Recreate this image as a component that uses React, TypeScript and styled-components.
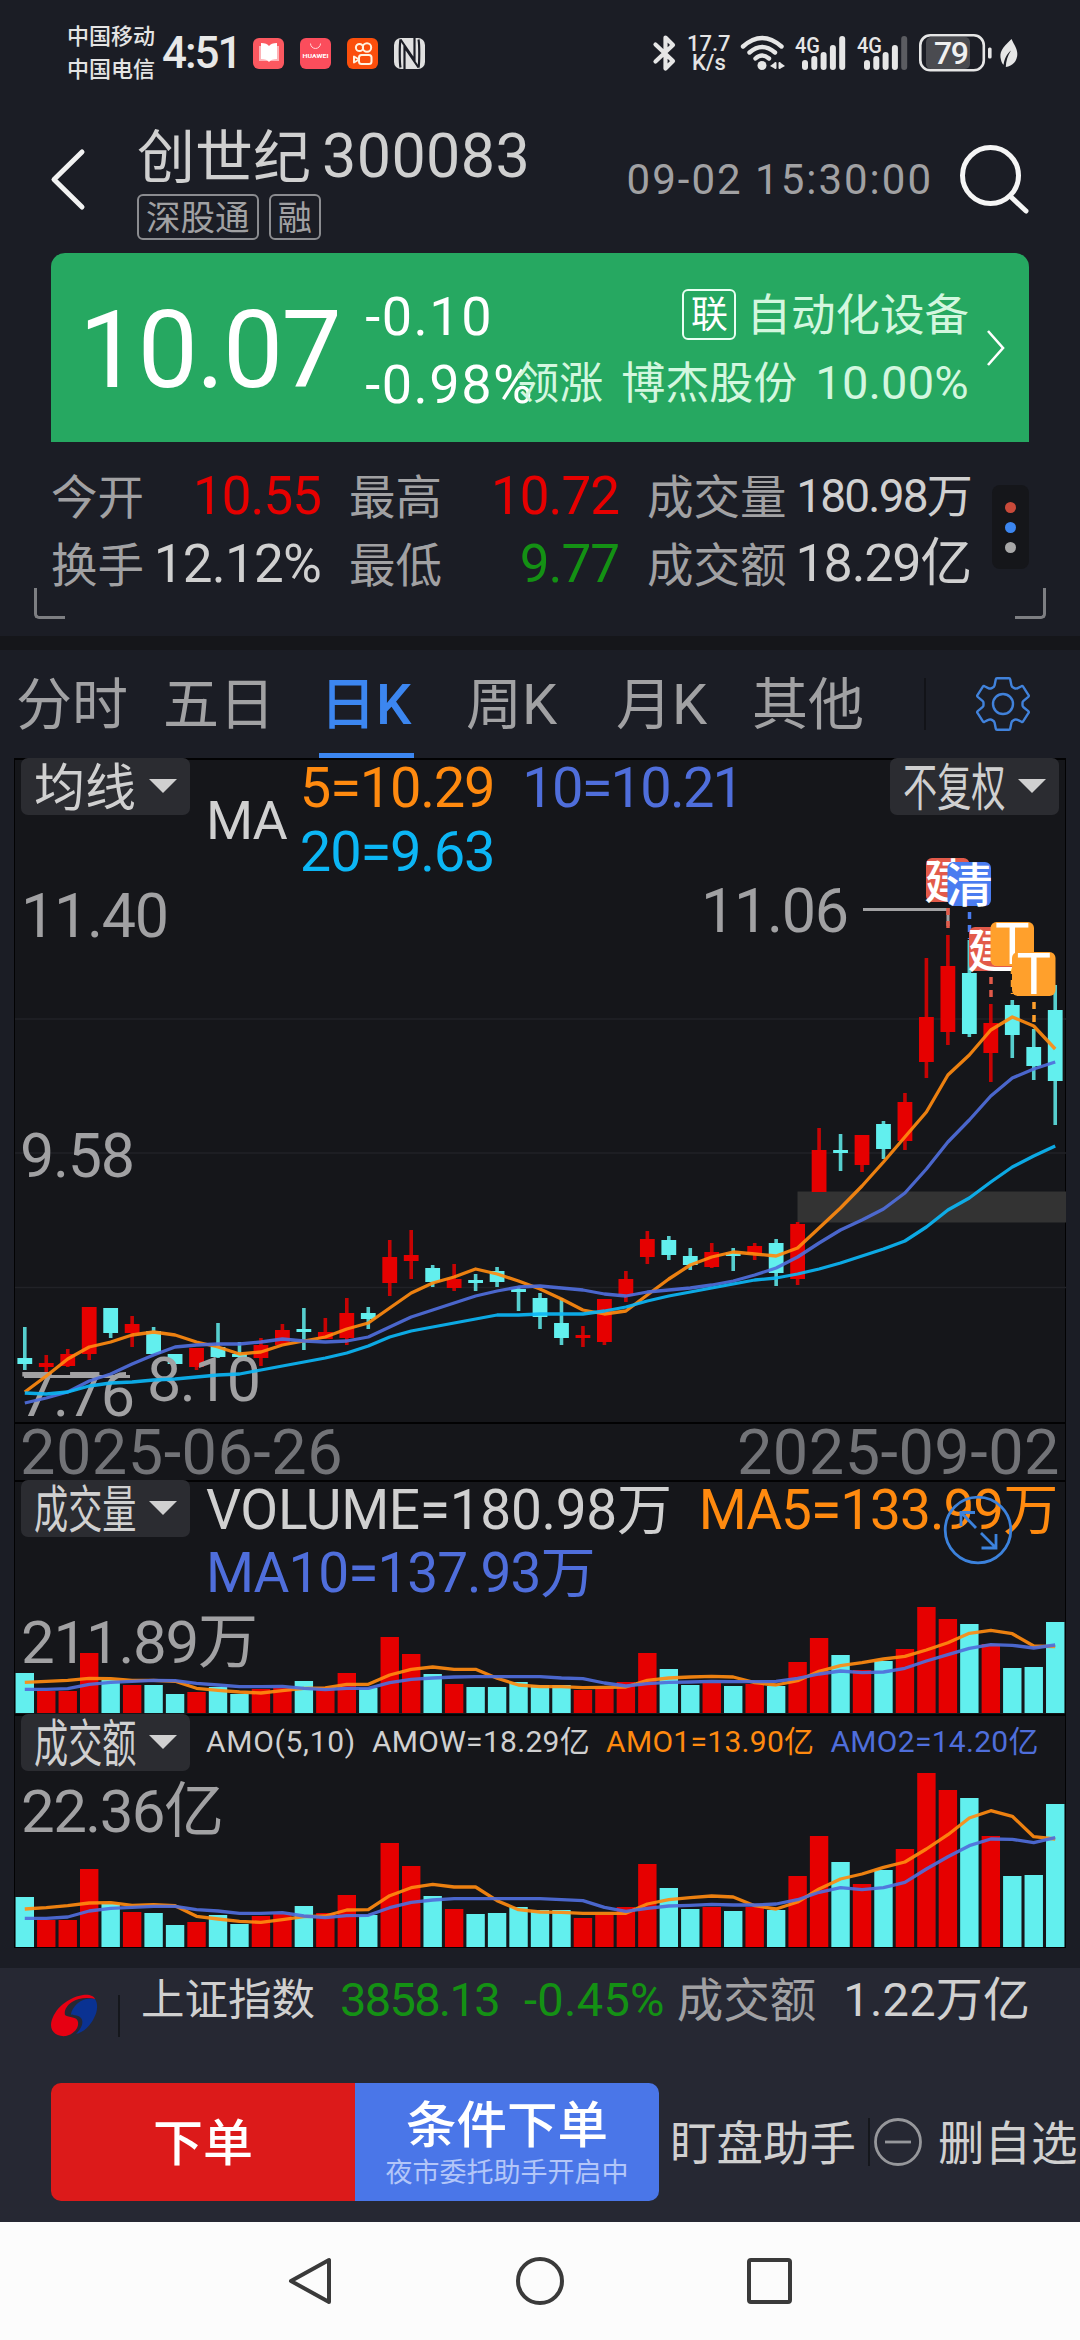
import React from 'react';
import styled, { createGlobalStyle, css } from 'styled-components';

const C = {
  bg: '#1b1d25',
  panel: '#15161a',
  bar: '#262833',
  text: '#d0d0d0',
  dim: '#a1a1a3',
  faint: '#727377',
  red: '#e60000',
  down: '#62efee',
  green: '#149114',
  blue: '#3c86f0',
  ma5: '#ff8a0f',
  ma10: '#4f6edb',
  ma20: '#0cb6f5',
};

const FONT = 'Roboto, "Noto Sans CJK SC", sans-serif';
const HAN_FONT = '"Open Sans", "Noto Sans CJK SC", sans-serif';

const GlobalStyle = createGlobalStyle`
  * { box-sizing: border-box; }
  html, body { margin: 0; padding: 0; background: ${C.bg}; }
  body { font-family: ${FONT}; color: ${C.text}; overflow: hidden; }
  svg { display: block; flex: none; overflow: visible; }
`;

/* ---------- market data ---------- */

type Candle = [up: 0 | 1, high: number, top: number, bottom: number, low: number];

const candles: Candle[] = [
  [0, 1327, 1358, 1364, 1370], [1, 1355, 1363, 1367, 1372], [1, 1349, 1354, 1366, 1367],
  [1, 1307, 1307, 1354, 1360], [0, 1308, 1308, 1333, 1338], [1, 1316, 1324, 1333, 1347],
  [0, 1327, 1331, 1354, 1354], [0, 1354, 1354, 1364, 1364], [1, 1348, 1348, 1367, 1370],
  [0, 1323, 1347, 1357, 1358], [0, 1342, 1354, 1357, 1358], [1, 1338, 1345, 1358, 1366],
  [1, 1324, 1330, 1345, 1345], [0, 1308, 1329, 1332, 1350], [1, 1318, 1332, 1339, 1339],
  [1, 1298, 1313, 1338, 1345], [0, 1307, 1313, 1319, 1329], [1, 1240, 1257, 1283, 1296],
  [1, 1230, 1255, 1261, 1279], [0, 1265, 1268, 1282, 1287], [1, 1264, 1279, 1288, 1291],
  [0, 1274, 1280, 1283, 1291], [0, 1267, 1271, 1282, 1287], [0, 1287, 1289, 1292, 1311],
  [0, 1293, 1298, 1317, 1329], [0, 1298, 1323, 1338, 1345], [1, 1326, 1335, 1338, 1347],
  [1, 1299, 1299, 1342, 1345], [1, 1271, 1279, 1296, 1302], [1, 1231, 1239, 1257, 1264],
  [0, 1236, 1240, 1255, 1260], [0, 1248, 1256, 1265, 1270], [1, 1243, 1252, 1267, 1268],
  [0, 1248, 1253, 1256, 1271], [1, 1243, 1246, 1254, 1260], [0, 1239, 1243, 1273, 1286],
  [1, 1222, 1224, 1279, 1285], [1, 1128, 1150, 1192, 1192], [0, 1134, 1150, 1153, 1171],
  [1, 1135, 1135, 1165, 1172], [0, 1121, 1124, 1149, 1159], [1, 1093, 1102, 1141, 1150],
  [1, 958, 1017, 1062, 1078], [1, 935, 966, 1032, 1045], [0, 940, 973, 1034, 1037],
  [1, 1004, 1023, 1053, 1082], [0, 1000, 1005, 1035, 1058], [0, 1029, 1047, 1066, 1080],
  [0, 985, 1010, 1081, 1125],
];

const priceMa5 = [1392, 1376, 1359, 1347, 1342, 1335, 1332, 1335, 1342, 1347, 1354, 1352, 1345, 1341, 1337, 1329, 1323, 1308, 1293, 1283, 1277, 1269, 1274, 1281, 1289, 1299, 1310, 1314, 1311, 1295, 1279, 1265, 1257, 1252, 1254, 1256, 1248, 1228, 1208, 1186, 1162, 1137, 1112, 1075, 1055, 1030, 1017, 1026, 1049];
const priceMa10 = [1403, 1398, 1392, 1381, 1374, 1364, 1355, 1347, 1345, 1344, 1344, 1342, 1339, 1341, 1342, 1341, 1337, 1327, 1317, 1310, 1303, 1296, 1291, 1287, 1286, 1288, 1290, 1294, 1296, 1292, 1290, 1288, 1285, 1281, 1275, 1268, 1257, 1243, 1230, 1220, 1209, 1193, 1169, 1142, 1120, 1096, 1078, 1069, 1062];
const priceMa20 = [1393, 1394, 1392, 1386, 1383, 1382, 1380, 1379, 1377, 1375, 1374, 1370, 1366, 1362, 1358, 1353, 1346, 1337, 1331, 1327, 1323, 1319, 1315, 1315, 1314, 1314, 1314, 1311, 1307, 1301, 1296, 1292, 1288, 1284, 1280, 1278, 1274, 1269, 1263, 1256, 1249, 1241, 1227, 1210, 1198, 1182, 1167, 1156, 1146];

const volTops = [1673, 1691, 1691, 1653, 1680, 1685, 1685, 1694, 1692, 1687, 1694, 1689, 1688, 1681, 1687, 1673, 1688, 1637, 1654, 1674, 1684, 1687, 1687, 1682, 1685, 1685, 1690, 1688, 1682, 1653, 1669, 1685, 1683, 1686, 1684, 1686, 1662, 1638, 1655, 1670, 1661, 1649, 1607, 1619, 1624, 1644, 1668, 1667, 1622];
const amtTops = [1897, 1920, 1920, 1869, 1904, 1912, 1913, 1925, 1922, 1915, 1924, 1916, 1914, 1906, 1913, 1895, 1915, 1843, 1866, 1896, 1909, 1914, 1913, 1907, 1910, 1910, 1918, 1915, 1907, 1864, 1888, 1909, 1907, 1911, 1907, 1910, 1876, 1836, 1862, 1884, 1870, 1849, 1773, 1790, 1798, 1836, 1876, 1875, 1804];

/* averages of the two lower panes, in thirds of a pixel below the y = 1460 line */
const volMa5 = [667, 664, 661, 655, 656, 661, 661, 664, 685, 691, 696, 699, 692, 685, 684, 673, 673, 645, 628, 621, 628, 628, 655, 675, 680, 680, 683, 682, 681, 661, 654, 651, 649, 651, 668, 675, 662, 634, 617, 608, 597, 589, 570, 548, 520, 511, 521, 558, 560];
const volMa10 = [688, 688, 686, 673, 667, 664, 661, 662, 670, 675, 680, 680, 679, 685, 689, 685, 685, 668, 658, 654, 651, 650, 650, 650, 650, 654, 656, 669, 678, 671, 667, 666, 664, 665, 665, 664, 655, 642, 633, 638, 636, 625, 603, 584, 565, 554, 556, 564, 555];
const amtMa5 = [1347, 1343, 1337, 1329, 1328, 1336, 1334, 1337, 1369, 1377, 1384, 1387, 1379, 1370, 1368, 1350, 1349, 1307, 1283, 1273, 1281, 1281, 1322, 1349, 1356, 1357, 1360, 1360, 1360, 1332, 1319, 1313, 1308, 1311, 1337, 1347, 1326, 1287, 1257, 1242, 1222, 1206, 1167, 1124, 1074, 1052, 1069, 1130, 1137];
const amtMa10 = [1375, 1375, 1371, 1353, 1345, 1342, 1339, 1339, 1349, 1353, 1360, 1360, 1358, 1368, 1373, 1367, 1366, 1343, 1327, 1320, 1316, 1316, 1316, 1316, 1316, 1319, 1322, 1342, 1354, 1345, 1338, 1336, 1333, 1335, 1335, 1332, 1319, 1297, 1283, 1289, 1283, 1267, 1227, 1190, 1157, 1137, 1138, 1148, 1133];

const barX = (i: number) => 24.8 + i * 21.467;
const line = (ys: number[]) => ys.map((y, i) => `${barX(i).toFixed(1)},${y}`).join(' ');
const lowerLine = (ys: number[]) => line(ys.map((y) => Math.round((1460 + y / 3) * 10) / 10));

/* ---------- text ---------- */

interface TxtProps {
  $s: number;
  $c?: string;
  $ls?: number;
  $w?: number;
  $ml?: number;
}

const Txt = styled.span<TxtProps>`
  flex: none;
  white-space: nowrap;
  line-height: 1;
  font-size: ${(p) => p.$s}px;
  color: ${(p) => p.$c ?? C.text};
  letter-spacing: ${(p) => p.$ls ?? 0}px;
  font-weight: ${(p) => p.$w ?? 400};
  margin-left: ${(p) => p.$ml ?? 0}px;
`;

const Han = styled(Txt)`
  font-family: ${HAN_FONT};
`;

/* ---------- layout ---------- */

const Screen = styled.div`
  width: 1080px;
  height: 2340px;
  display: flex;
  flex-direction: column;
  background: ${C.bg};
  overflow: hidden;
`;

const StatusBar = styled.header`
  height: 105px;
  padding: 1px 62px 0 67px;
  display: flex;
  align-items: center;
`;

const Carriers = styled.div`
  display: grid;
  gap: 11px;
  width: 95px;
  padding-bottom: 3px;
`;

const StatusGroup = styled.div<{ $gap: number; $ml?: string }>`
  display: flex;
  align-items: center;
  gap: ${(p) => p.$gap}px;
  margin-left: ${(p) => p.$ml ?? '0'};
`;

const Speed = styled.div`
  display: grid;
  justify-items: center;
  width: 43px;
  line-height: 19px;
  font-size: 22px;
  font-weight: 500;
  color: #e4e4e4;
  margin: 0 10px 0 11px;
`;

const AppIcon = styled.div<{ $bg: string }>`
  width: 31px;
  height: 31px;
  border-radius: 6px;
  background: ${(p) => p.$bg};
  display: grid;
  place-items: center;
`;

const Header = styled.div`
  height: 148px;
  padding: 0 51px;
  display: flex;
  align-items: flex-start;
`;

const TitleBlock = styled.div`
  margin-left: 50px;
  padding-top: 19px;
`;

const HeaderRight = styled.div`
  height: 148px;
  margin-left: auto;
  padding-top: 1px;
  display: flex;
  align-items: center;
  gap: 27px;
`;

const TitleRow = styled.div`
  height: 64px;
  display: flex;
  align-items: center;
  gap: 11px;
`;

const TagRow = styled.div`
  margin-top: 6px;
  display: flex;
  gap: 10px;
`;

const Tag = styled.span`
  height: 46px;
  padding: 0 7px;
  border: 2px solid #8b8c90;
  border-radius: 6px;
  color: ${C.dim};
  font-family: ${HAN_FONT};
  font-size: 34.5px;
  line-height: 41px;
`;

const QuoteCard = styled.section`
  margin: 0 51px;
  height: 189px;
  padding: 0 24px 0 28px;
  border-radius: 14px 14px 0 0;
  background: #26a861;
  display: flex;
  align-items: center;
`;

const Price = styled(Txt)`
  padding-top: 5px;
`;

const Change = styled.div`
  width: 150px;
  margin-left: 25px;
  display: grid;
  gap: 14px;
  padding-top: 6px;
`;

const Sector = styled.div`
  flex: 1;
  display: grid;
  justify-items: end;
  padding-top: 1px;
`;

const SectorRow = styled.div<{ $gap: number }>`
  height: 68px;
  display: flex;
  align-items: center;
  gap: ${(p) => p.$gap}px;
`;

const LinkTag = styled.span`
  width: 54px;
  height: 51px;
  border: 2px solid #e9fff2;
  border-radius: 6px;
  color: #fff;
  font-family: ${HAN_FONT};
  font-size: 37px;
  line-height: 45px;
  text-align: center;
`;

const Stats = styled.section`
  position: relative;
  height: 194px;
  padding: 20px 51px 0;
  display: flex;
  align-items: flex-start;
  justify-content: space-between;
`;

const StatGrid = styled.div`
  display: grid;
  grid-template-columns: 270px 270px 324px;
  grid-auto-rows: 68px;
  column-gap: 28px;
`;

const StatCell = styled.div`
  display: flex;
  align-items: center;
  justify-content: space-between;
`;

const MorePill = styled.div`
  width: 37px;
  height: 84px;
  margin-top: 23px;
  border-radius: 8px;
  background: ${C.panel};
  display: flex;
  flex-direction: column;
  align-items: center;
  justify-content: center;
  gap: 9px;
`;

const Dot = styled.i<{ $c: string }>`
  width: 11px;
  height: 11px;
  border-radius: 50%;
  background: ${(p) => p.$c};
`;

const Corner = styled.i<{ $side: 'left' | 'right' }>`
  position: absolute;
  bottom: 17px;
  width: 31px;
  height: 31px;
  border-bottom: 3px solid #7d7e82;
  ${(p) =>
    p.$side === 'left'
      ? 'left: 34px; border-left: 3px solid #7d7e82; border-bottom-left-radius: 5px;'
      : 'right: 34px; border-right: 3px solid #7d7e82; border-bottom-right-radius: 5px;'}
`;

const Gap = styled.div`
  height: 14px;
  background: ${C.panel};
`;

const Tabs = styled.nav`
  height: 108px;
  padding: 0 50px 0 16px;
  display: flex;
`;

const Tab = styled.div<{ $active?: boolean; $w: number }>`
  width: ${(p) => p.$w}px;
  height: 108px;
  line-height: 111px;
  font-size: 56px;
  white-space: nowrap;
  color: ${(p) => (p.$active ? C.blue : C.dim)};
  font-weight: ${(p) => (p.$active ? 500 : 400)};
  ${(p) =>
    p.$active &&
    css`
      background: linear-gradient(${C.blue}, ${C.blue}) no-repeat 1px 103px / 95px 5px;
      text-indent: 2px;
    `}
`;

const TabDivider = styled.i`
  width: 2px;
  height: 52px;
  margin: 28px 0 0 60px;
  background: #121318;
`;

const GearWrap = styled.div`
  margin: 27px 0 0 auto;
`;

const ChartPanel = styled.main`
  margin: 0 14px;
  background: ${C.panel};
  box-shadow: inset 0 0 0 1px #020203;
`;

const Pane = styled.section<{ $h: number }>`
  display: grid;
  height: ${(p) => p.$h}px;
  box-shadow: inset 0 1px 0 1px #020203;
  & > * { grid-area: 1 / 1; }
`;

const PaneHead = styled.div`
  padding: 0 7px;
  display: flex;
  align-items: flex-start;
  z-index: 1;
`;

const Select = styled.div`
  width: 169px;
  height: 57px;
  padding: 0 13px 1px;
  border-radius: 7px;
  background: #2b2c31;
  display: flex;
  align-items: center;
`;

const SelectLabel = styled.span<{ $x: number }>`
  width: 104px;
  white-space: nowrap;
  font-family: ${HAN_FONT};
  font-size: 51px;
  line-height: 56px;
  transform: scaleX(${(p) => p.$x});
  transform-origin: 0 50%;
`;

const Caret = styled.i`
  margin-left: auto;
  border: solid transparent;
  border-width: 14px 14px 0;
  border-top-color: ${C.text};
`;

const Legend = styled.div<{ $ml: number; $pt: number; $gap: number }>`
  flex: 1;
  margin-left: ${(p) => p.$ml}px;
  padding-top: ${(p) => p.$pt}px;
  display: flex;
  flex-wrap: wrap;
  column-gap: ${(p) => p.$gap}px;
  row-gap: 8px;
`;

const MaTitle = styled.div`
  margin-left: 16px;
  padding-top: 36px;
`;

const DateRow = styled.div`
  height: 58px;
  padding: 3px 6px 0 6px;
  display: flex;
  align-items: center;
  justify-content: space-between;
  box-shadow: inset 0 1px 0 1px #020203;
`;

const ExpandButton = styled.div`
  width: 68px;
  height: 70px;
  justify-self: end;
  margin: 15px 54px 0 0;
  z-index: 2;
`;

const Footer = styled.footer`
  margin-top: 20px;
  height: 254px;
  background: ${C.bar};
`;

const IndexRow = styled.div`
  height: 66px;
  padding: 0 0 4px 51px;
  display: flex;
  align-items: center;
`;

const IndexLogo = styled.div`
  align-self: flex-end;
  margin-bottom: -8px;
  width: 69px;
  height: 44px;
  display: flex;
  justify-content: space-between;
  align-items: center;
`;

const Divider = styled.i<{ $h: number; $ml?: number }>`
  width: 2px;
  height: ${(p) => p.$h}px;
  margin-left: ${(p) => p.$ml ?? 0}px;
  background: #15171c;
`;

const ActionRow = styled.div`
  margin-top: 49px;
  height: 118px;
  padding-left: 51px;
  display: flex;
  align-items: center;
`;

const OrderButton = styled.div<{ $kind: 'plain' | 'conditional' }>`
  width: 304px;
  height: 118px;
  flex: none;
  display: flex;
  flex-direction: column;
  align-items: center;
  justify-content: center;
  gap: 8px;
  background: ${(p) => (p.$kind === 'plain' ? '#dc1a1a' : '#4a76e8')};
  border-radius: ${(p) => (p.$kind === 'plain' ? '10px 0 0 10px' : '0 10px 10px 0')};
`;

const RemoveIcon = styled.svg`
  margin-left: 4px;
`;

const SystemNav = styled.div`
  flex: 1;
  background: #fcfcfc;
  display: grid;
  grid-template-columns: repeat(3, 229px);
  justify-content: center;
  justify-items: center;
  align-items: center;
`;

/* ---------- icons ---------- */

const BluetoothIcon = () => (
  <svg width="23" height="36" viewBox="0 0 23 36" fill="none" stroke="#e6e6e6" strokeWidth="4.2" strokeLinecap="round" strokeLinejoin="round">
    <path d="M2.500 9.500 20 26l-7.500 7.500v-31L20 10 2.500 26.500" />
  </svg>
);

const WifiIcon = () => (
  <svg width="45" height="36" viewBox="0 0 45 36" fill="none" stroke="#e6e6e6" strokeWidth="4.4" strokeLinecap="round">
    <path d="M3 11.500Q22 -5.500 41.500 11.500" />
    <path d="M9.500 17.500Q22 6.500 35 17.500" />
    <path d="M15.500 23.500Q22 17.500 29 23.500" />
    <circle cx="22" cy="30.500" r="4.500" fill="#e6e6e6" stroke="none" />
    <path d="M30 31 35.500 27v7zM45 31 39.500 27v7z" fill="#e6e6e6" stroke="none" />
    <path d="M35.500 28v5M39.500 28v5" strokeWidth="2" />
  </svg>
);

const Signal = ({ bars }: { bars: number }) => (
  <svg width="51" height="35" viewBox="0 0 51 35">
    <text x="0" y="17" fontSize="22" fontWeight="500" fontFamily={FONT} fill="#e6e6e6" textLength="25" lengthAdjust="spacingAndGlyphs">4G</text>
    {[10, 14, 18, 25, 34].map((h, i) => (
      <rect key={h} x={7 + i * 9.3} y={34 - h} width="6" height={h} rx="3" fill={i < bars ? '#e6e6e6' : '#5b5c61'} />
    ))}
  </svg>
);

const BatteryIcon = () => (
  <svg width="73" height="38" viewBox="0 0 73 38">
    <rect x="7" y="3" width="44" height="32" rx="5" fill="#4a4b50" />
    <rect x="1.300" y="1.300" width="63.500" height="35" rx="10" fill="none" stroke="#e6e6e6" strokeWidth="2.600" />
    <rect x="69" y="13.500" width="3.600" height="11" rx="1.500" fill="#e6e6e6" />
    <text x="15" y="30" fontSize="32" fontWeight="500" fontFamily={FONT} fill="#f0f0f0" textLength="35">79</text>
  </svg>
);

const LeafIcon = () => (
  <svg width="18" height="29" viewBox="0 0 18 29">
    <path d="M11.500 0C2 9-1 13 1 21c.5 2 1.300 4 2.600 4.800C4.500 19 7 15 11 11.500 7.500 17 6 22 5.800 28c7-1 11.500-6 11.500-13C17.300 9 14 6 11.500 0z" fill="#e6e6e6" />
  </svg>
);

const NfcIcon = () => (
  <svg width="31" height="31" viewBox="0 0 31 31">
    <rect width="31" height="31" rx="7" fill="#e0e0e0" />
    <g fill="none" stroke="#1b1d25" strokeWidth="2.200">
      <path d="M6.500 1.500C5.500 6 5.500 25 6.500 29.500M24.500 1.500c1 4.500 1 23.500 0 28" />
      <path d="M10.500 31V9l14 20.500M20.500 0v22L6.500 1.500" />
    </g>
  </svg>
);

const GearIcon = () => (
  <svg width="54" height="54" viewBox="0 0 54 54" fill="none" stroke="#4182db" strokeWidth="2.400" strokeLinejoin="round">
    <path d="M21 1.300h12q1 0 1.200 1l1.200 6q.3 1.600 2 2.400l1.300.6q1.500.6 3-.2l3.800-1.900q1-.4 1.600.5l5.600 8.600q.4.800-.4 1.500l-4.800 4q-1 .9-1 2v2.400q0 1.200 1 2l4.800 4q.8.700.4 1.500l-5.600 8.600q-.6.900-1.600.5l-3.800-1.900q-1.500-.8-3-.2l-1.300.6q-1.700.8-2 2.400l-1.200 6q-.2 1-1.200 1H21q-1 0-1.200-1l-1.200-6q-.3-1.600-2-2.400l-1.300-.6q-1.500-.6-3 .2l-3.800 1.900q-1 .4-1.600-.5l-5.600-8.600q-.4-.8.4-1.500l4.800-4q1-.8 1-2v-2.400q0-1.100-1-2l-4.800-4q-.8-.7-.4-1.500l5.600-8.600q.6-.9 1.600-.5l3.800 1.900q1.500.8 3 .2l1.300-.6q1.700-.8 2-2.400l1.200-6q.2-1 1.200-1z" />
    <circle cx="27" cy="27" r="10" />
  </svg>
);

const ExpandIcon = () => (
  <svg width="68" height="70" viewBox="0 0 68 70" fill="none" stroke="#3c82dc" strokeWidth="2.800">
    <circle cx="34" cy="35" r="32.800" />
    <path d="M17 31V17.500h14M18 18.500 32 33M37 38l14 14M37.500 53H52V39" />
  </svg>
);

const IndexMark = () => (
  <svg width="47" height="44" viewBox="0 0 47 44">
    <path d="M44 5C36 3 27 4 21 8c-6 4-8 9-7 13 4 3 12 1 13 7 1 6-4 12-12 14C6 43 0 38 0 31 1 18 14 4 32 1c6-1 11 1 12 4z" fill="#e60012" />
    <path d="M44 5c3 4 3 12-1 19-4 8-10 14-18 16 6-6 8-12 5-16-3-4-10-2-10-4 1-6 7-13 15-15 3-.7 6-.9 9 0z" fill="#0a3292" />
  </svg>
);

/* ---------- chart drawings ---------- */

const Average = ({ points, color }: { points: string; color: string }) => (
  <polyline points={points} fill="none" stroke={color} strokeWidth="3.300" strokeLinejoin="round" opacity="0.92" />
);

const PriceLabel = ({ x, y, w, children }: { x: number; y: number; w: number; children: string }) => (
  <text x={x} y={y} fontSize="61" fontFamily={FONT} fill={C.dim} textLength={w}>{children}</text>
);

const Marker = ({ x, y, color, label }: { x: number; y: number; color: string; label: string }) => (
  <g>
    <rect x={x} y={y} width="43.500" height="44" rx="6" fill={color} />
    <text x={x + 21.700} y={y + (label === 'T' ? 42 : 40)} fontSize={label === 'T' ? 58 : 47} fontWeight={label === 'T' ? 400 : 500} textAnchor="middle" fontFamily={FONT} fill="#fff">{label}</text>
  </g>
);

const KLineChart = () => (
  <svg width="1052" height="664" viewBox="14 758 1052 664">
    <path d="M15 1019H1066M15 1153H1066M15 1287.500H1066" stroke="#212227" strokeWidth="1.500" />
    <rect x="797.500" y="1191.500" width="268.500" height="31" fill="#333333" />
    {candles.map(([up, high, top, bottom, low], i) => (
      <g key={i} fill={up ? C.red : C.down}>
        <rect x={barX(i) - 1.800} y={high} width="3.600" height={Math.max(low - high, 1)} opacity="0.85" />
        <rect x={barX(i) - 7.400} y={top} width="14.800" height={Math.max(bottom - top, 3)} />
      </g>
    ))}
    <path d="M24 1376.500H130" stroke={C.dim} strokeWidth="3" />
    <PriceLabel x={21} y={937} w={148}>11.40</PriceLabel>
    <PriceLabel x={20} y={1177} w={115}>9.58</PriceLabel>
    <PriceLabel x={20} y={1416} w={115}>7.76</PriceLabel>
    <PriceLabel x={147} y={1401} w={114}>8.10</PriceLabel>
    <PriceLabel x={701} y={932} w={148}>11.06</PriceLabel>
    <path d="M863 909.500H948V926" stroke={C.dim} strokeWidth="3" fill="none" />
    <Average points={line(priceMa5)} color={C.ma5} />
    <Average points={line(priceMa10)} color={C.ma10} />
    <Average points={line(priceMa20)} color={C.ma20} />
    <g fill="none" strokeWidth="3.500" strokeDasharray="7 6">
      <path d="M948 908v20M991 977v22" stroke="#e25a4a" />
      <path d="M969.500 912v27" stroke="#4a7cf0" />
      <path d="M1012.500 967v27M1034 1002v23" stroke="#ffa02c" />
    </g>
    <Marker x={926} y={858} color="#e25a4a" label="建" />
    <Marker x={947.500} y={862} color="#4a7cf0" label="清" />
    <Marker x={969} y={927} color="#e25a4a" label="建" />
    <Marker x={990.500} y={922} color="#ffa02c" label="T" />
    <Marker x={1012} y={952} color="#ffa02c" label="T" />
  </svg>
);

interface LowerProps {
  y: number;
  tops: number[];
  ma5: number[];
  ma10: number[];
  label: string;
  labelY: number;
  labelW: number;
}

const LowerChart = ({ y, tops, ma5, ma10, label, labelY, labelW }: LowerProps) => (
  <svg width="1052" height="234" viewBox={`14 ${y} 1052 234`}>
    <text x="21" y={labelY} fontSize="60" fontFamily={FONT} fill={C.dim} textLength={labelW}>{label}</text>
    {tops.map((top, i) => (
      <rect key={i} x={barX(i) - 9.200} y={top} width="18.400" height={y + 233 - top} fill={candles[i][0] ? C.red : C.down} />
    ))}
    <Average points={lowerLine(ma5)} color={C.ma5} />
    <Average points={lowerLine(ma10)} color={C.ma10} />
  </svg>
);

const Dropdown = ({ label }: { label: string }) => (
  <Select>
    <SelectLabel $x={label.length > 2 ? 0.67 : 1}>{label}</SelectLabel>
    <Caret />
  </Select>
);

const stats: [string, string, string, number, number][] = [
  ['今开', '10.55', C.red, 53, -1],
  ['最高', '10.72', C.red, 53, -1],
  ['成交量', '180.98万', C.text, 46, -1.8],
  ['换手', '12.12%', C.text, 53, -0.8],
  ['最低', '9.77', C.green, 53, -1],
  ['成交额', '18.29亿', C.text, 52, -1.2],
];

export default function App() {
  return (
    <Screen>
      <GlobalStyle />
      <StatusBar>
        <Carriers>
          <Han $s={22} $c="#e4e4e4" $w={500}>中国移动</Han>
          <Han $s={22} $c="#e4e4e4" $w={500}>中国电信</Han>
        </Carriers>
        <Txt $s={44} $c="#e8e8e8" $w={500} $ls={-2}>4:51</Txt>
        <StatusGroup $gap={16} $ml="auto">
          <AppIcon $bg="#fb5860">
            <svg width="22" height="22" viewBox="0 0 22 22">
              <path d="M1 4h20v15H1z" fill="#fff" opacity="0.55" />
              <path d="M3 1q6 0 8 3 2-3 8-3v16q-6 0-8 3-2-3-8-3z" fill="#fff" />
            </svg>
          </AppIcon>
          <AppIcon $bg="#fb4d5c">
            <svg width="31" height="31" viewBox="0 0 31 31">
              <path d="M10.500 5.500a5 5 0 0 0 10 0" fill="none" stroke="#ffd6d8" strokeWidth="1" />
              <text x="2.500" y="20" fontSize="6" fontWeight="700" fontFamily={FONT} fill="#fff" textLength="26" lengthAdjust="spacingAndGlyphs">HUAWEI</text>
            </svg>
          </AppIcon>
          <AppIcon $bg="#fb4f0c">
            <svg width="31" height="31" viewBox="0 0 31 31" fill="none" stroke="#fff2df" strokeWidth="2">
              <circle cx="12.500" cy="9.500" r="3.600" />
              <circle cx="20" cy="9.500" r="4.200" />
              <rect x="12" y="17" width="12.500" height="9" rx="2.500" />
              <path d="M12 21.500 7 18.500v6z" strokeLinejoin="round" />
            </svg>
          </AppIcon>
          <NfcIcon />
        </StatusGroup>
        <StatusGroup $gap={0} $ml="228px">
          <BluetoothIcon />
          <Speed>
            <span>17.7</span>
            <span>K/s</span>
          </Speed>
          <WifiIcon />
          <StatusGroup $gap={11} $ml="10px">
            <Signal bars={5} />
            <Signal bars={4} />
            <BatteryIcon />
          </StatusGroup>
          <StatusGroup $gap={0} $ml="8px">
            <LeafIcon />
          </StatusGroup>
        </StatusGroup>
      </StatusBar>

      <Header>
        <svg width="36" height="148" viewBox="51 105 36 148" fill="none" stroke="#f2f2f2" strokeWidth="5" strokeLinecap="round" strokeLinejoin="round">
          <path d="M82 152 54 179.500 82 207" />
        </svg>
        <TitleBlock>
          <TitleRow>
            <Han $s={58}>创世纪</Han>
            <Txt $s={61} $ls={0.400}>300083</Txt>
          </TitleRow>
          <TagRow>
            <Tag>深股通</Tag>
            <Tag>融</Tag>
          </TagRow>
        </TitleBlock>
        <HeaderRight>
          <Txt $s={42} $c={C.dim} $ls={2}>09-02 15:30:00</Txt>
          <svg width="69" height="69" viewBox="0 0 69 69" fill="none" stroke="#f5f5f5" strokeWidth="5" strokeLinecap="round">
            <circle cx="30.500" cy="30.500" r="28" />
            <path d="m50 51 16 15" />
          </svg>
        </HeaderRight>
      </Header>

      <QuoteCard>
        <Price $s={107} $c="#fff" $w={400} $ls={-1.500}>10.07</Price>
        <Change>
          <Txt $s={54} $c="#fff" $ls={1.500}>-0.10</Txt>
          <Txt $s={54} $c="#fff" $ls={1.500}>-0.98%</Txt>
        </Change>
        <Sector>
          <SectorRow $gap={10}>
            <LinkTag>联</LinkTag>
            <Han $s={44.500} $c="#d3f7df">自动化设备</Han>
          </SectorRow>
          <SectorRow $gap={18}>
            <Han $s={44} $c="#d3f7df">领涨</Han>
            <Han $s={44} $c="#d3f7df">博杰股份</Han>
            <Txt $s={47} $c="#d3f7df" $ls={0.200}>10.00%</Txt>
          </SectorRow>
        </Sector>
        <svg width="37" height="36" viewBox="-18 0 37 36" fill="none" stroke="#fff" strokeWidth="2.600">
          <path d="m1 1 15 17L1 35" />
        </svg>
      </QuoteCard>

      <Stats>
        <StatGrid>
          {stats.map(([label, value, color, size, ls]) => (
            <StatCell key={label}>
              <Han $s={46.500} $c={C.dim}>{label}</Han>
              <Txt $s={size} $c={color} $ls={ls}>{value}</Txt>
            </StatCell>
          ))}
        </StatGrid>
        <MorePill>
          <Dot $c="#c94a3a" />
          <Dot $c="#3c86f0" />
          <Dot $c="#a8a8a8" />
        </MorePill>
        <Corner $side="left" />
        <Corner $side="right" />
      </Stats>

      <Gap />

      <Tabs>
        <Tab $w={147}>分时</Tab>
        <Tab $w={155}>五日</Tab>
        <Tab $w={148} $active>日K</Tab>
        <Tab $w={150}>周K</Tab>
        <Tab $w={136}>月K</Tab>
        <Tab $w={112}>其他</Tab>
        <TabDivider />
        <GearWrap><GearIcon /></GearWrap>
      </Tabs>

      <ChartPanel>
        <Pane $h={664}>
          <KLineChart />
          <PaneHead>
            <Dropdown label="均线" />
            <MaTitle><Txt $s={54} $ls={-1}>MA</Txt></MaTitle>
            <Legend $ml={13} $pt={2} $gap={28}>
              <Txt $s={56} $c={C.ma5} $ls={-1.200}>5=10.29</Txt>
              <Txt $s={56} $c={C.ma10} $ls={-1.800}>10=10.21</Txt>
              <Txt $s={56} $c={C.ma20} $ls={-1.200}>20=9.63</Txt>
            </Legend>
            <Dropdown label="不复权" />
          </PaneHead>
        </Pane>
        <DateRow>
          <Txt $s={63} $c={C.faint} $ls={0.500}>2025-06-26</Txt>
          <Txt $s={63} $c={C.faint} $ls={0.500}>2025-09-02</Txt>
        </DateRow>
        <Pane $h={234}>
          <LowerChart y={1480} tops={volTops} ma5={volMa5} ma10={volMa10} label="211.89万" labelY={1663} labelW={237} />
          <PaneHead>
            <Dropdown label="成交量" />
            <Legend $ml={16} $pt={3} $gap={27}>
              <Txt $s={55} $ls={-0.300}>VOLUME=180.98万</Txt>
              <Txt $s={55} $c={C.ma5} $ls={-1}>MA5=133.99万</Txt>
              <Txt $s={55} $c={C.ma10} $ls={-1}>MA10=137.93万</Txt>
            </Legend>
          </PaneHead>
          <ExpandButton><ExpandIcon /></ExpandButton>
        </Pane>
        <Pane $h={234}>
          <LowerChart y={1714} tops={amtTops} ma5={amtMa5} ma10={amtMa10} label="22.36亿" labelY={1832} labelW={203} />
          <PaneHead>
            <Dropdown label="成交额" />
            <Legend $ml={16} $pt={13} $gap={16}>
              <Txt $s={30} $ls={0.700}>AMO(5,10)</Txt>
              <Txt $s={30} $ls={0.300}>AMOW=18.29亿</Txt>
              <Txt $s={30} $ls={0.300} $c={C.ma5}>AMO1=13.90亿</Txt>
              <Txt $s={30} $ls={0.300} $c={C.ma10}>AMO2=14.20亿</Txt>
            </Legend>
          </PaneHead>
        </Pane>
      </ChartPanel>

      <Footer>
        <IndexRow>
          <IndexLogo>
            <IndexMark />
            <Divider $h={42} />
          </IndexLogo>
          <Han $s={43.500} $ml={21}>上证指数</Han>
          <Txt $s={47} $c={C.green} $ml={25} $ls={-1.700}>3858.13</Txt>
          <Txt $s={47} $c={C.green} $ml={25} $ls={0.300}>-0.45%</Txt>
          <Han $s={46.500} $c={C.dim} $ml={12}>成交额</Han>
          <Txt $s={47} $ml={27} $ls={0.200}>1.22万亿</Txt>
        </IndexRow>
        <ActionRow>
          <OrderButton $kind="plain">
            <Han $s={50} $c="#fff" $w={500}>下单</Han>
          </OrderButton>
          <OrderButton $kind="conditional">
            <Han $s={50.500} $c="#fff" $w={500}>条件下单</Han>
            <Han $s={27} $c="#b3c6f8">夜市委托助手开启中</Han>
          </OrderButton>
          <Han $s={46.500} $ml={11}>盯盘助手</Han>
          <Divider $h={48} $ml={12} />
          <RemoveIcon width="48" height="48" viewBox="0 0 48 48" fill="none" stroke="#96979b" strokeWidth="2.800">
            <circle cx="24" cy="24" r="22.500" />
            <path d="M11 24h26" />
          </RemoveIcon>
          <Han $s={46.500} $ml={16}>删自选</Han>
        </ActionRow>
      </Footer>

      <SystemNav>
        <svg width="46" height="50" viewBox="0 0 46 50" fill="none" stroke="#3a3a3a" strokeWidth="4" strokeLinejoin="round">
          <path d="M41 4v42L3 25z" />
        </svg>
        <svg width="48" height="48" viewBox="0 0 48 48" fill="none" stroke="#3a3a3a" strokeWidth="4">
          <circle cx="24" cy="24" r="22" />
        </svg>
        <svg width="45" height="46" viewBox="0 0 45 46" fill="none" stroke="#3a3a3a" strokeWidth="4">
          <rect x="2" y="2" width="41" height="42" rx="2" />
        </svg>
      </SystemNav>
    </Screen>
  );
}
